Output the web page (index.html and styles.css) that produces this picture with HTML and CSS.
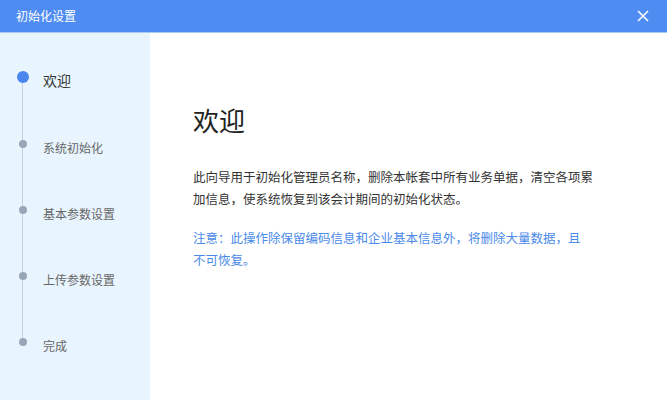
FILE: index.html
```html
<!DOCTYPE html>
<html lang="zh">
<head>
<meta charset="utf-8">
<link rel="stylesheet" href="styles.css">
</head>
<body>
<div class="dialog">
  <div class="header">
    <span class="title">初始化设置</span>
    <svg class="close" width="12" height="12" viewBox="0 0 12 12"><path d="M1 1L11 11M11 1L1 11" stroke="#ffffff" stroke-width="1.5" fill="none"/></svg>
  </div>
  <div class="body">
    <div class="sidebar">
      <div class="steps">
        <div class="step active"><span class="dot"></span><span class="label">欢迎</span></div>
        <div class="step"><span class="dot"></span><span class="label">系统初始化</span></div>
        <div class="step"><span class="dot"></span><span class="label">基本参数设置</span></div>
        <div class="step"><span class="dot"></span><span class="label">上传参数设置</span></div>
        <div class="step last"><span class="dot"></span><span class="label">完成</span></div>
      </div>
    </div>
    <div class="main">
      <h1 class="heading">欢迎</h1>
      <p class="desc">此向导用于初始化管理员名称，删除本帐套中所有业务单据，清空各项累加信息，使系统恢复到该会计期间的初始化状态。</p>
      <p class="note">注意：此操作除保留编码信息和企业基本信息外，将删除大量数据，且不可恢复。</p>
    </div>
  </div>
</div>
</body>
</html>
```
FILE: styles.css
```css
html, body {
  margin: 0;
  padding: 0;
  width: 667px;
  height: 400px;
  overflow: hidden;
  background: #ffffff;
  font-family: "Noto Sans CJK SC", "Noto Sans", sans-serif;
}
.dialog {
  display: flex;
  flex-direction: column;
  height: 400px;
}
.header {
  height: 32px;
  background: #4f8cf1;
  border-bottom: 1px solid #a9c9f7;
  display: flex;
  align-items: center;
  justify-content: space-between;
  padding: 0 18px 0 16px;
  flex-shrink: 0;
}
.title {
  color: #ffffff;
  font-size: 12px;
  line-height: 1;
}
.close {
  display: block;
}
.body {
  flex: 1;
  display: flex;
}
.sidebar {
  width: 150px;
  background: #e9f5fe;
  flex-shrink: 0;
}
.steps {
  padding-top: 35px;
  padding-left: 17px;
  display: flex;
  flex-direction: column;
}
.step {
  position: relative;
  height: 66px;
  display: flex;
  align-items: flex-start;
}
.step::before {
  content: "";
  position: absolute;
  left: 5px;
  top: 10px;
  width: 1px;
  height: 66px;
  background: #c5d1de;
}
.step.last::before {
  display: none;
}
.dot {
  width: 8px;
  height: 8px;
  border-radius: 50%;
  background: #98a7b8;
  margin: 6px 0 0 2px;
  flex-shrink: 0;
  position: relative;
}
.label {
  margin-left: 16px;
  margin-top: 4px;
  font-size: 12px;
  color: #666666;
  line-height: 20px;
}
.step.active .dot {
  width: 12px;
  height: 12px;
  margin: 3px 0 0 0;
  background: #4a86ee;
}
.step.active .label {
  margin-left: 14px;
  font-size: 14px;
  color: #333333;
  line-height: 20px;
  margin-top: 2px;
}
.main {
  flex: 1;
  padding: 69px 0 0 43px;
}
.heading {
  margin: 0;
  font-size: 26px;
  font-weight: normal;
  color: #222222;
  line-height: 36px;
}
.desc {
  margin: 28px 0 0 0;
  width: 410px;
  font-size: 12.5px;
  line-height: 22px;
  color: #333333;
}
.note {
  margin: 17px 0 0 0;
  width: 395px;
  font-size: 12.5px;
  line-height: 22px;
  color: #4a8ae8;
}
```
